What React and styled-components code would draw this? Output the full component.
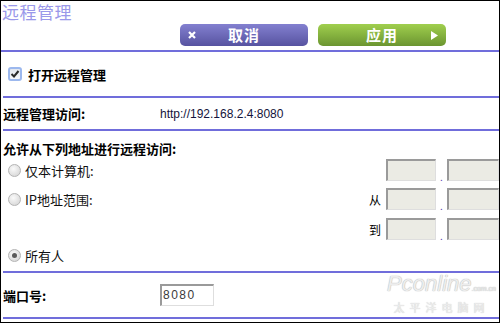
import React from "react";
import styled, { createGlobalStyle } from "styled-components";

const GlobalStyle = createGlobalStyle`
  body {
    margin: 0;
    background: #fff;
    font-family: "Noto Sans CJK SC", "Liberation Sans", sans-serif;
  }
`;

const Frame = styled.div`
  position: relative;
  width: 500px;
  height: 323px;
  box-sizing: border-box;
  border: 1px solid #000;
  overflow: hidden;
  background: #fff;
`;

const Title = styled.div`
  height: 23px;
  padding-left: 1px;
  font-size: 17px;
  line-height: 21px;
  color: #9a98ea;
  letter-spacing: 0.5px;
`;

const ButtonBar = styled.div`
  display: flex;
  gap: 10px;
  padding-left: 179px;
  margin-bottom: 4px;
`;

const Button = styled.div`
  display: flex;
  align-items: center;
  width: 128px;
  height: 22px;
  padding: 0 8px;
  box-sizing: border-box;
  border-radius: 5px;
  color: #fff;
  font-size: 15px;
  font-weight: bold;
  background: ${(p) =>
    p.$tone === "green"
      ? "linear-gradient(#a0cf4e, #6b9530)"
      : "linear-gradient(#8380d0, #5753a0)"};
`;

const ButtonIcon = styled.span`
  display: flex;
  width: 8px;
  justify-content: center;
`;

const ButtonLabel = styled.span`
  flex: 1;
  text-align: center;
  line-height: 22px;
  letter-spacing: 1px;
`;

const Divider = styled.div`
  height: 2px;
  margin-left: ${(p) => (p.$full ? "0" : "2px")};
  background: #706ddb;
`;

const Section = styled.div`
  display: flex;
  flex-direction: column;
  justify-content: ${(p) => (p.$top ? "flex-start" : "center")};
  height: ${(p) => p.$h}px;
  padding-left: 2px;
  padding-top: ${(p) => p.$pt || 0}px;
  box-sizing: border-box;
`;

const Line = styled.div`
  display: flex;
  align-items: center;
  height: ${(p) => p.$h || 22}px;
  margin-top: ${(p) => p.$mt || 0}px;
`;

const Bold = styled.span`
  font-size: 13px;
  font-weight: bold;
  color: #000;
  width: ${(p) => (p.$w ? p.$w + "px" : "auto")};
  flex-shrink: 0;
`;

const Plain = styled.span`
  font-size: 13px;
  color: #111;
`;

const Url = styled.span`
  font-family: "Liberation Sans", Arial, sans-serif;
  font-size: 12px;
  color: #14143c;
`;

const CheckBox = styled.span`
  display: flex;
  align-items: center;
  justify-content: center;
  width: 14px;
  height: 14px;
  margin: 0 6px 0 5px;
  box-sizing: border-box;
  border: 2px solid #9cb8ee;
  border-radius: 3px;
  background: linear-gradient(#e2e6ee, #f7f8fb);
`;

const Radio = styled.span`
  position: relative;
  width: 13px;
  height: 13px;
  margin: 0 4px 0 5px;
  box-sizing: border-box;
  border: 1px solid #b4b4b4;
  border-radius: 50%;
  background: radial-gradient(circle at 40% 35%, #fafafa, #d0d0d0);
  flex-shrink: 0;

  &::after {
    content: "";
    display: ${(p) => (p.$checked ? "block" : "none")};
    position: absolute;
    left: 3px;
    top: 3px;
    width: 5px;
    height: 5px;
    border-radius: 50%;
    background: #5a5a5a;
  }
`;

const Choice = styled.div`
  display: flex;
  align-items: center;
  flex: 1;
`;

const Range = styled.div`
  display: flex;
  align-items: center;
  width: 130px;
  flex-shrink: 0;
`;

const RangeLabel = styled.span`
  width: 17px;
  font-size: 12px;
  color: #000;
`;

const Box = styled.div`
  width: ${(p) => p.$w}px;
  height: 22px;
  flex-shrink: 0;
  box-sizing: border-box;
  border-top: 2px solid #9a9a9a;
  border-left: 2px solid #9a9a9a;
  border-right: 1px solid #dedede;
  border-bottom: 1px solid #dedede;
  background: ${(p) => (p.$white ? "#fff" : "#ebebe4")};
  font-family: "Liberation Sans", Arial, sans-serif;
  font-size: 12px;
  line-height: 18px;
  letter-spacing: 1.5px;
  color: #3a3a3a;
  padding-left: 1px;
`;

const Dot = styled.span`
  width: 11px;
  align-self: flex-end;
  text-align: center;
  font-size: 10px;
  line-height: 8px;
  color: #5a3fb0;
`;

const Watermark = styled.div`
  position: absolute;
  right: 3px;
  bottom: 8px;
  text-align: center;
  white-space: nowrap;
  color: #ededed;
  pointer-events: none;
`;

const Brand = styled.div`
  font-family: "Liberation Sans", Arial, sans-serif;
  font-size: 22px;
  font-style: italic;
  line-height: 22px;
  text-shadow: 0 0 1px #bbb, 0 0 1px #bbb;

  small {
    font-size: 7px;
    font-style: normal;
  }
`;

const BrandCn = styled.div`
  font-size: 11px;
  letter-spacing: 5px;
  line-height: 14px;
  text-shadow: 0 0 1px #bbb;
`;

const Cross = () => (
  <svg width="8" height="8" viewBox="0 0 8 8">
    <path d="M1 1 L7 7 M7 1 L1 7" stroke="#fff" strokeWidth="2.2" />
  </svg>
);

const Play = () => (
  <svg width="7" height="9" viewBox="0 0 7 9">
    <path d="M0 0 L7 4.5 L0 9 Z" fill="#fff" />
  </svg>
);

const Check = () => (
  <svg width="10" height="10" viewBox="0 0 10 10">
    <path d="M1.5 5 L4 7.5 L8.5 2" stroke="#2a2a2a" strokeWidth="2" fill="none" />
  </svg>
);

const RangeRow = ({ label }) => (
  <Range>
    <RangeLabel>{label}</RangeLabel>
    <Box $w={50} />
    <Dot>.</Dot>
    <Box $w={52} />
  </Range>
);

export default function App() {
  return (
    <>
      <GlobalStyle />
      <Frame>
        <Title>远程管理</Title>
        <ButtonBar>
          <Button>
            <ButtonIcon>
              <Cross />
            </ButtonIcon>
            <ButtonLabel>取消</ButtonLabel>
            <ButtonIcon />
          </Button>
          <Button $tone="green">
            <ButtonIcon />
            <ButtonLabel>应用</ButtonLabel>
            <ButtonIcon>
              <Play />
            </ButtonIcon>
          </Button>
        </ButtonBar>
        <Divider $full />

        <Section $h={44}>
          <Line>
            <CheckBox>
              <Check />
            </CheckBox>
            <Bold>打开远程管理</Bold>
          </Line>
        </Section>
        <Divider />

        <Section $h={31}>
          <Line>
            <Bold $w={157}>远程管理访问:</Bold>
            <Url>http://192.168.2.4:8080</Url>
          </Line>
        </Section>
        <Divider />

        <Section $h={140} $top $pt={8}>
          <Line $h={18}>
            <Bold>允许从下列地址进行远程访问:</Bold>
          </Line>
          <Line $mt={2}>
            <Choice>
              <Radio />
              <Plain>仅本计算机:</Plain>
            </Choice>
            <RangeRow label="" />
          </Line>
          <Line $mt={7}>
            <Choice>
              <Radio />
              <Plain>IP地址范围:</Plain>
            </Choice>
            <RangeRow label="从" />
          </Line>
          <Line $mt={8}>
            <Choice />
            <RangeRow label="到" />
          </Line>
          <Line $mt={4}>
            <Choice>
              <Radio $checked />
              <Plain>所有人</Plain>
            </Choice>
          </Line>
        </Section>
        <Divider />

        <Section $h={44}>
          <Line>
            <Bold $w={157}>端口号:</Bold>
            <Box $w={54} $white>
              8080
            </Box>
          </Line>
        </Section>
        <Divider />

        <Watermark>
          <Brand>
            Pconline<small>.com.cn</small>
          </Brand>
          <BrandCn>太平洋电脑网</BrandCn>
        </Watermark>
      </Frame>
    </>
  );
}
